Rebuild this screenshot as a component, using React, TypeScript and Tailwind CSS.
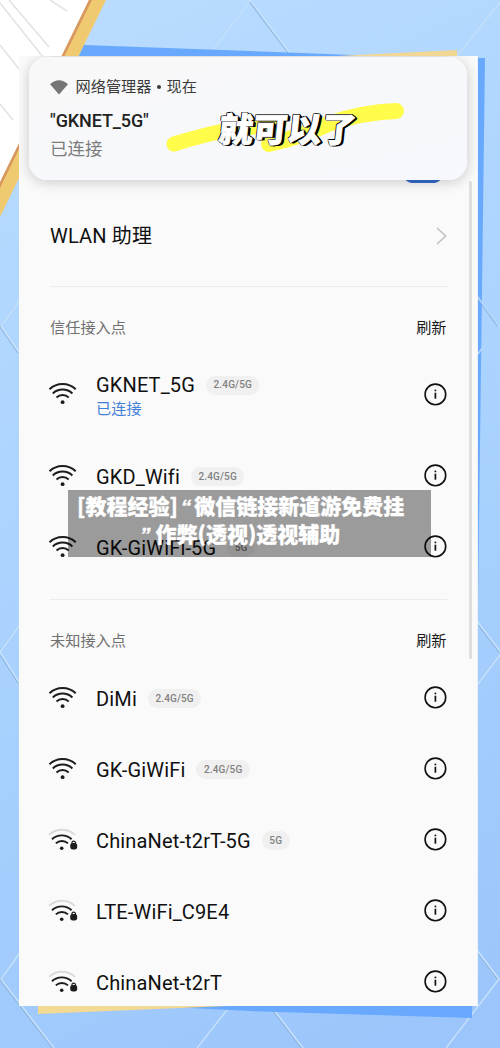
import React from 'react';

interface Network {
  name: string;
  band?: string;
  secured?: boolean;
  connected?: boolean;
}

const trusted: Network[] = [
  { name: 'GKD_Wifi', band: '2.4G/5G' },
  { name: 'GK-GiWiFi-5G', band: '5G' },
];

const unknown: Network[] = [
  { name: 'DiMi', band: '2.4G/5G' },
  { name: 'GK-GiWiFi', band: '2.4G/5G' },
  { name: 'ChinaNet-t2rT-5G', band: '5G', secured: true },
  { name: 'LTE-WiFi_C9E4', secured: true },
  { name: 'ChinaNet-t2rT', secured: true },
];

const Backdrop = () => (
  <svg className="absolute inset-0" width="500" height="1048" viewBox="0 0 500 1048" fill="none">
    <defs>
      <linearGradient id="sky" x1="0" y1="0" x2="500" y2="1048" gradientUnits="userSpaceOnUse">
        <stop offset="0" stopColor="#badcff" />
        <stop offset="0.5" stopColor="#a9d2fe" />
        <stop offset="1" stopColor="#9bc5fb" />
      </linearGradient>
    </defs>
    <rect width="500" height="1048" fill="url(#sky)" />

    <path d="M89 0 0 183V0Z" fill="#fff" />
    <g stroke="#e3e3e5" strokeWidth="1.6">
      <path d="M9 0 49 47M0 3 43 57M50 0 67 11M0 45 19 69M0 104 13 120" />
    </g>
    <path d="M89 0H106L0 217V183Z" fill="#efca70" />
    <path d="M89 0H92L0 188V182Z" fill="#d9985f" />

    <g strokeLinejoin="round">
      <g stroke="#8fb5dc" strokeWidth="1.2" transform="translate(-1 1)">
        <path d="M250 0 292 56M250 0 208 56M500 2 457 56M19 301 1 326 19 352M477 296 499 326 477 355" />
        <path d="M19 626 0 652 19 682M477 621 500 651M500 655 477 685M19 954 1 979 54 1048" />
        <path d="M230 1006 197 1048M271 1006 303 1048M477 950 499 979 446 1048" />
      </g>
      <g stroke="#c6e1fc" strokeWidth="1.5">
        <path d="M250 0 292 56M250 0 208 56M500 2 457 56M19 301 1 326 19 352" />
        <path d="M19 626 0 652 19 682M477 621 500 651M500 655 477 685M19 954 1 979 54 1048" />
        <path d="M230 1006 197 1048M271 1006 303 1048M477 950 499 979 446 1048" />
      </g>
    </g>

    <path d="M84 45 250 51 380 56V60H77Z" fill="#68a8fd" />
    <path d="M318 57 457 50V57Z" fill="#f2d794" />
    <path d="M470 58H485L478 600H470Z" fill="#68a8fd" />
    <path d="M170 1000V1007L250 1011 472 1018V1000Z" fill="#68a8fd" />
    <path d="M38 1000V1014L228 1006V1000Z" fill="#f2d994" />
    <path d="M477 296 499 326 477 355" stroke="#b4d8fb" strokeWidth="1.6" />
  </svg>
);

const WifiIcon = ({ secured }: { secured?: boolean }) =>
  secured ? (
    <svg className="-ml-0.5 shrink-0" width="30" height="24" viewBox="0 0 30 24" fill="none" strokeWidth="1.9">
      <path d="M1 6.9A19 19 0 0 1 27 6.9" stroke="#dadada" />
      <path d="M4 11.2A14.4 14.4 0 0 1 23.6 11.2" stroke="#1c1c1c" />
      <path d="M7.8 15.4A9 9 0 0 1 20 15.4" stroke="#1c1c1c" />
      <circle cx="13.7" cy="20.2" r="1.8" fill="#1c1c1c" />
      <rect x="22.2" y="15" width="7" height="6.4" rx="2.6" fill="#1c1c1c" />
      <path d="M23.9 16V14.9a1.8 1.8 0 0 1 3.6 0V16" stroke="#1c1c1c" strokeWidth="1.2" />
    </svg>
  ) : (
    <svg className="-ml-0.5 shrink-0" width="30" height="24" viewBox="0 0 30 24" fill="none" stroke="#1c1c1c" strokeWidth="2">
      <path d="M1.5 7.2A19 19 0 0 1 27.7 7.2" />
      <path d="M4.8 11.4A14.4 14.4 0 0 1 24.4 11.4" />
      <path d="M8.5 15.4A9 9 0 0 1 20.7 15.4" />
      <circle cx="14.6" cy="20.2" r="1.9" fill="#1c1c1c" stroke="none" />
    </svg>
  );

const InfoIcon = () => (
  <svg className="ml-auto shrink-0" width="23" height="23" viewBox="0 0 23 23" fill="none">
    <circle cx="11.4" cy="11.4" r="10.3" stroke="#111" strokeWidth="1.6" />
    <path d="M11.4 9.7v6" stroke="#111" strokeWidth="1.7" />
    <circle cx="11.4" cy="7.4" r="0.95" fill="#111" />
  </svg>
);

const Band = ({ label }: { label: string }) => (
  <span className="ml-[11px] flex h-[19px] items-center rounded-full bg-[#f0f0f0] px-[7.5px] text-[10px] font-medium tracking-[0.15px] text-[#808080]">
    {label}
  </span>
);

const NetworkRow = ({ network }: { network: Network }) => (
  <li className={network.connected ? 'mb-[19px] flex h-[54px] items-center' : 'flex h-[71px] items-center'}>
    <WifiIcon secured={network.secured} />
    <div className={network.connected ? 'ml-[18px] mt-[6px]' : 'ml-[18px] mt-[2px]'}>
      <div className="flex h-6 items-center text-[20px] leading-6 tracking-[0.15px] text-[#101010]">
        <span>{network.name}</span>
        {network.band && <Band label={network.band} />}
      </div>
      {network.connected && <div className="text-[15.2px] leading-6 text-[#4380d8]">已连接</div>}
    </div>
    <InfoIcon />
  </li>
);

const SectionTitle = ({ title }: { title: string }) => (
  <div className="flex items-center justify-between text-[15.2px] leading-5">
    <span className="text-[#707070]">{title}</span>
    <button className="text-[#1b1b1b]">刷新</button>
  </div>
);

const Notification = () => (
  <div className="absolute left-[10px] top-[1px] h-[123px] w-[438px] rounded-[18px] bg-linear-to-br from-[#f8f8f8] to-[#f6f8fd] pl-[21px] pt-[20px] shadow-[0_2px_14px_rgba(0,0,0,0.2)]">
    <div className="flex h-5 items-center text-[15.2px] leading-5 text-[#3a3a3a]">
      <svg className="mr-[7.5px]" width="18" height="15" viewBox="0 0 18 15">
        <path d="M0 4.2Q9-3.6 18 4.2L9 14.6Z" fill="#757575" />
      </svg>
      <span>网络管理器</span>
      <span className="mx-[5.5px] size-1 rounded-full bg-[#3a3a3a]" />
      <span>现在</span>
    </div>
    <div className="mt-3 text-[18px] font-medium leading-6 tracking-[-0.1px] text-[#222]">"GKNET_5G"</div>
    <div className="mt-[4px] text-[17.5px] leading-6 text-[#7c7c7c]">已连接</div>

    {/* highlighter strokes behind the caption */}
    <svg className="absolute left-[134px] top-[40px]" width="244" height="60" viewBox="0 0 244 60" fill="none">
      <g stroke="#fffd4a" strokeLinecap="round" strokeLinejoin="round">
        <path d="M11 47Q40 38 65 33L116 27" strokeWidth="15" />
        <path d="M106 47Q138 40 165 27Q200 15 233 14" strokeWidth="16" />
      </g>
    </svg>
    <span className="absolute left-[190px] top-[49px] -skew-x-6 whitespace-nowrap text-[34px] font-black leading-12 tracking-[0.3px] text-white [-webkit-text-stroke:0.8px_#fff] [text-shadow:-1px_0_0_#000,0_-1px_0_#000,0_1px_0_#000,1px_0_0_#000,-1px_-1px_0_#000,1px_-1px_0_#000,2px_0_0_#000,2px_1px_0_#000,3px_1px_0_#000]">
      就可以了
    </span>
  </div>
);

export default function App() {
  return (
    <div className="relative h-[1048px] w-[500px] overflow-hidden pl-[19px] pt-[56px] font-['Roboto','Noto_Sans_CJK_SC',sans-serif]">
      <Backdrop />
      <main className="relative h-[950px] w-[458.5px] overflow-hidden border-r border-[#e9f2fc] bg-[#fafafa] pl-[31px] pr-[30px]">
        {/* toggle peeking out below the notification */}
        <div className="flex h-[130px] items-end justify-end bg-linear-to-b from-[#f0f0f0] to-[#fafafa] pb-[3px]">
          <div className="mr-[3px] h-[23px] w-[42px] rounded-full bg-[#326bcb]" />
        </div>
        <div className="flex h-[100px] items-center justify-between text-[20px] tracking-[0.15px] text-[#101010]">
          <span>WLAN 助理</span>
          <svg width="11" height="18" viewBox="0 0 11 18" fill="none" stroke="#c4c4c4" strokeWidth="1.7">
            <path d="M1 1 9.6 9 1 17" />
          </svg>
        </div>

        <section className="border-t border-[#ececec] pt-[31px]">
          <SectionTitle title="信任接入点" />
          <ul className="pt-[29px]">
            <NetworkRow network={{ name: 'GKNET_5G', band: '2.4G/5G', connected: true }} />
            {trusted.map((n) => (
              <NetworkRow key={n.name} network={n} />
            ))}
          </ul>
        </section>

        <section className="mt-[17px] border-t border-[#ececec] pt-[31px]">
          <SectionTitle title="未知接入点" />
          <ul className="pt-[11px]">
            {unknown.map((n) => (
              <NetworkRow key={n.name} network={n} />
            ))}
          </ul>
        </section>

        <div className="absolute left-[450px] top-[125px] h-[478px] w-[3px] rounded-full bg-[#dedede]" />
        <Notification />
      </main>

      <div className="absolute left-[68px] top-[490px] h-[67px] w-[363px] bg-[#000]/38 pt-px font-['Noto_Sans_CJK_SC',sans-serif] text-[21px] font-black leading-7 text-white [-webkit-text-stroke:0.3px_#fff]">
        <div className="h-7 whitespace-nowrap pl-[9px]">
          [教程经验]<span className="mx-[3px] font-['Liberation_Sans'] font-bold italic">“</span>微信链接新道游免费挂
        </div>
        <div className="h-7 whitespace-nowrap pl-[72px]">
          <span className="mr-[5px] font-['Liberation_Sans'] font-bold italic">”</span>作弊(透视)透视辅助
        </div>
      </div>
    </div>
  );
}
